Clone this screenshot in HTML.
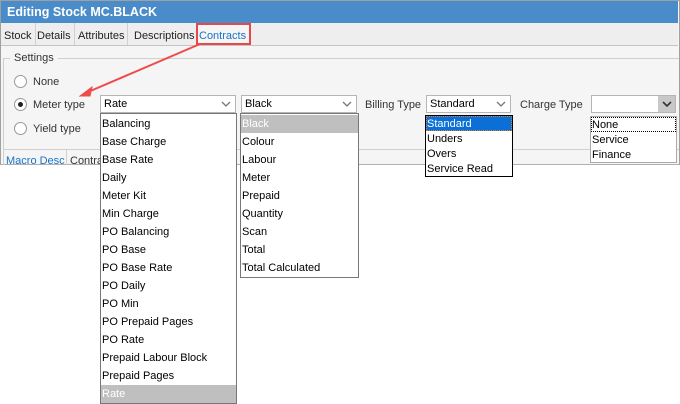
<!DOCTYPE html>
<html><head><style>
*{margin:0;padding:0;box-sizing:border-box}
body{width:680px;height:404px;background:#fff;font-family:"Liberation Sans",sans-serif;font-size:11px;color:#000;position:relative;overflow:hidden}
.a{position:absolute}
.win{left:0;top:0;width:680px;height:165px;background:#f5f5f5;border:1px solid #a0a0a0;border-bottom:1px solid #b0b0b0}
.title{left:1px;top:1px;width:677px;height:22px;background:#4a8cca;color:#fff;font-weight:bold;font-size:12.5px;line-height:22px;padding-left:6px}
.tabs{left:1px;top:23px;width:677px;height:23px;background:#eee;border-bottom:1px solid #c4c4c4}
.tab{position:absolute;top:0;height:22px;line-height:26px;border-right:1px solid #d0d0d0;padding:0 3px;color:#222}
.group{left:3px;top:58px;width:676px;height:110px;border:1px solid #cfcfcf;border-right:none}
.radio{width:13px;height:13px;border:1px solid #999;border-radius:50%;background:#fff}
.combo{height:18px;border:1px solid #b5b5b5;background:#fff;line-height:17px;padding-left:3px}
.chev{position:absolute;right:4px;top:3px;width:10px;height:10px}
.list{background:#fff;border:1px solid #777}
.list div{height:18px;line-height:18px;padding-left:1px}
.l2 div{height:15px;line-height:16px;padding-left:1px}
</style></head><body>
<div class="a win"></div>
<div class="a title">Editing Stock MC.BLACK</div>
<div class="a tabs">
<div class="tab" style="left:0">Stock</div>
<div class="tab" style="left:33px">Details</div>
<div class="tab" style="left:74px">Attributes</div>
<div class="tab" style="left:130px">Descriptions</div>
<div class="tab" style="left:195px;color:#1a73c8;background:#f5f5f5">Contracts</div>
</div>
<div class="a" style="left:196px;top:23px;width:55px;height:22px;border:2px solid #e8474a"></div>
<div class="a group"></div>
<div class="a" style="left:10px;top:52px;background:#f5f5f5;padding:0 4px;color:#333">Settings</div>
<div class="a radio" style="left:14px;top:75px"></div><div class="a" style="left:33px;top:76px;color:#333">None</div>
<div class="a radio" style="left:14px;top:98px"></div><div class="a" style="left:18px;top:102px;width:5px;height:5px;border-radius:50%;background:#222"></div><div class="a" style="left:33px;top:99px;color:#333">Meter type</div>
<div class="a radio" style="left:14px;top:122px"></div><div class="a" style="left:33px;top:123px;color:#333">Yield type</div>
<div class="a" style="left:3px;top:149px;width:676px;height:1px;background:#d0d0d0"></div>
<div class="a" style="left:6px;top:155px;color:#1a73c8;font-size:11px">Macro Desc</div>
<div class="a" style="left:66px;top:149px;width:1px;height:16px;background:#d0d0d0"></div>
<div class="a" style="left:70px;top:155px;color:#333">Contra</div>
<div class="a" style="left:0;top:165px;width:680px;height:239px;background:#fff"></div>

<div class="a combo" style="left:100px;top:95px;width:136px">Rate<svg class="chev" viewBox="0 0 10 10"><path d="M1 3l4 4 4-4" fill="none" stroke="#777" stroke-width="1.3"/></svg></div>
<div class="a combo" style="left:241px;top:95px;width:116px">Black<svg class="chev" viewBox="0 0 10 10"><path d="M1 3l4 4 4-4" fill="none" stroke="#777" stroke-width="1.3"/></svg></div>
<div class="a" style="left:365px;top:99px;color:#333">Billing Type</div>
<div class="a combo" style="left:426px;top:95px;width:85px">Standard<svg class="chev" viewBox="0 0 10 10"><path d="M1 3l4 4 4-4" fill="none" stroke="#777" stroke-width="1.3"/></svg></div>
<div class="a" style="left:520px;top:99px;color:#333">Charge Type</div>
<div class="a combo" style="left:591px;top:95px;width:85px"><div class="a" style="right:0;top:0;width:17px;height:16px;background:#c8c8c8"></div><svg class="chev" style="right:3px" viewBox="0 0 10 10"><path d="M1 3l4 4 4-4" fill="none" stroke="#333" stroke-width="1.6"/></svg></div>

<div class="a list" style="left:100px;top:113px;width:137px;height:291px;padding-top:1px">
<div>Balancing</div><div>Base Charge</div><div>Base Rate</div><div>Daily</div><div>Meter Kit</div><div>Min Charge</div><div>PO Balancing</div><div>PO Base</div><div>PO Base Rate</div><div>PO Daily</div><div>PO Min</div><div>PO Prepaid Pages</div><div>PO Rate</div><div>Prepaid Labour Block</div><div>Prepaid Pages</div><div style="background:#bfbfbf;color:#fff">Rate</div>
</div>
<div class="a list" style="left:240px;top:113px;width:119px;height:165px;padding-top:1px">
<div style="background:#bfbfbf;color:#fff">Black</div><div>Colour</div><div>Labour</div><div>Meter</div><div>Prepaid</div><div>Quantity</div><div>Scan</div><div>Total</div><div>Total Calculated</div>
</div>
<div class="a list l2" style="left:425px;top:115px;width:88px;height:62px;border-color:#000">
<div style="background:#0a6fd6;color:#fff;outline:1px dotted #e08020;outline-offset:-1px">Standard</div><div>Unders</div><div>Overs</div><div>Service Read</div>
</div>
<div class="a list l2" style="left:590px;top:116px;width:87px;height:47px;border-color:#aaa">
<div style="outline:1px dotted #000;outline-offset:-1px">None</div><div>Service</div><div>Finance</div>
</div>

<svg class="a" style="left:0;top:0" width="680" height="404"><path d="M200 44L88 92" stroke="#ef4b4b" stroke-width="2"/><path d="M80 96l12-9-2 9z" fill="#ef4b4b" stroke="#ef4b4b"/></svg>
</body></html>
